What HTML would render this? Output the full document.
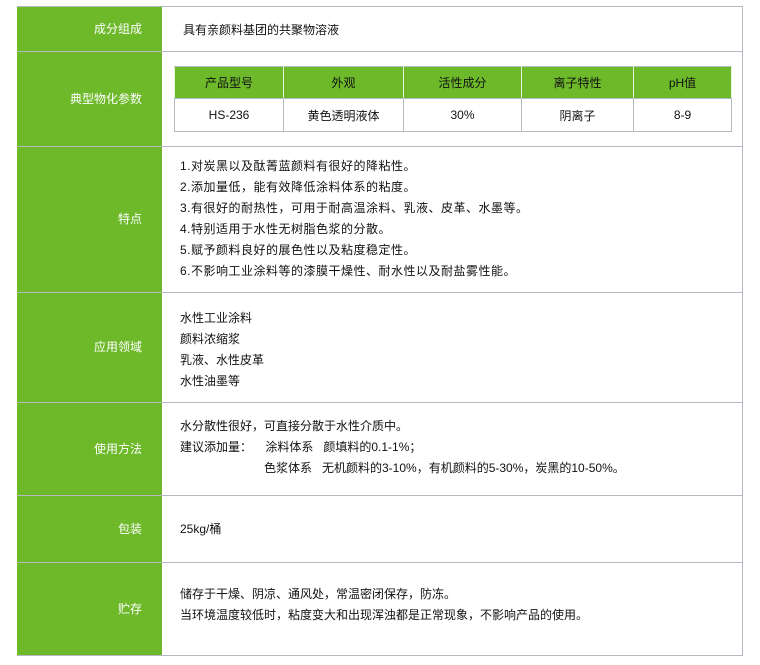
<!DOCTYPE html><html><head><meta charset="utf-8"><style>
body{margin:0;width:760px;height:665px;background:#fff;font-family:"Liberation Sans","Noto Sans CJK SC",sans-serif;font-size:12px;color:#111;position:relative;overflow:hidden}
.a{position:absolute}
.g{position:absolute;left:17px;width:145px;background:#6db92a;color:#fff;text-align:right;box-sizing:border-box;padding-right:20px}
.h{position:absolute;left:17px;width:726px;height:1px;background:#b4bac0}
.l{line-height:21px}
table{position:absolute;left:174px;top:66px;border-collapse:collapse;width:558px}
td{border:1px solid #b4bac0;text-align:center;padding:0}
tr.hd td{background:#6db92a;height:31px;border-color:#b4bac0 #e8f3df}
tr.bd td{height:32px}
</style></head><body>
<div class="a" style="left:17px;top:6px;width:1px;height:650px;background:#b4bac0"></div>
<div class="a" style="left:742px;top:6px;width:1px;height:650px;background:#b4bac0"></div>
<div class="g" style="top:7px;height:44px;line-height:44px">成分组成</div>
<div class="g" style="top:52px;height:94px;line-height:94px">典型物化参数</div>
<div class="g" style="top:147px;height:145px;line-height:145px">特点</div>
<div class="g" style="top:293px;height:109px;line-height:109px">应用领域</div>
<div class="g" style="top:403px;height:92px;line-height:92px">使用方法</div>
<div class="g" style="top:496px;height:66px;line-height:66px">包装</div>
<div class="g" style="top:563px;height:92px;line-height:92px">贮存</div>
<div class="h" style="top:6px"></div><div class="h" style="top:51px"></div><div class="h" style="top:146px"></div><div class="h" style="top:292px"></div><div class="h" style="top:402px"></div><div class="h" style="top:495px"></div><div class="h" style="top:562px"></div><div class="h" style="top:655px"></div>
<div class="a" style="left:183px;top:22px;line-height:16px">具有亲颜料基团的共聚物溶液</div>
<table><tr class="hd"><td style="width:108px">产品型号</td><td style="width:119px">外观</td><td style="width:117px">活性成分</td><td style="width:111px">离子特性</td><td>pH值</td></tr>
<tr class="bd"><td>HS-236</td><td>黄色透明液体</td><td>30%</td><td>阴离子</td><td>8-9</td></tr></table>
<div class="a l" style="left:180px;top:156px;letter-spacing:0.5px">1.对炭黑以及酞菁蓝颜料有很好的降粘性。<br>2.添加量低，能有效降低涂料体系的粘度。<br>3.有很好的耐热性，可用于耐高温涂料、乳液、皮革、水墨等。<br>4.特别适用于水性无树脂色浆的分散。<br>5.赋予颜料良好的展色性以及粘度稳定性。<br>6.不影响工业涂料等的漆膜干燥性、耐水性以及耐盐雾性能。</div>
<div class="a l" style="left:180px;top:308px">水性工业涂料<br>颜料浓缩浆<br>乳液、水性皮革<br>水性油墨等</div>
<div class="a l" style="left:180px;top:416px">水分散性很好，可直接分散于水性介质中。<br>建议添加量：&nbsp;&nbsp;&nbsp;&nbsp;涂料体系&nbsp;&nbsp;&nbsp;颜填料的0.1-1%；<br><span style="padding-left:84px">色浆体系&nbsp;&nbsp;&nbsp;无机颜料的3-10%，有机颜料的5-30%，炭黑的10-50%。</span></div>
<div class="a l" style="left:180px;top:519px">25kg/桶</div>
<div class="a l" style="left:180px;top:584px">储存于干燥、阴凉、通风处，常温密闭保存，防冻。<br>当环境温度较低时，粘度变大和出现浑浊都是正常现象，不影响产品的使用。</div>
</body></html>
